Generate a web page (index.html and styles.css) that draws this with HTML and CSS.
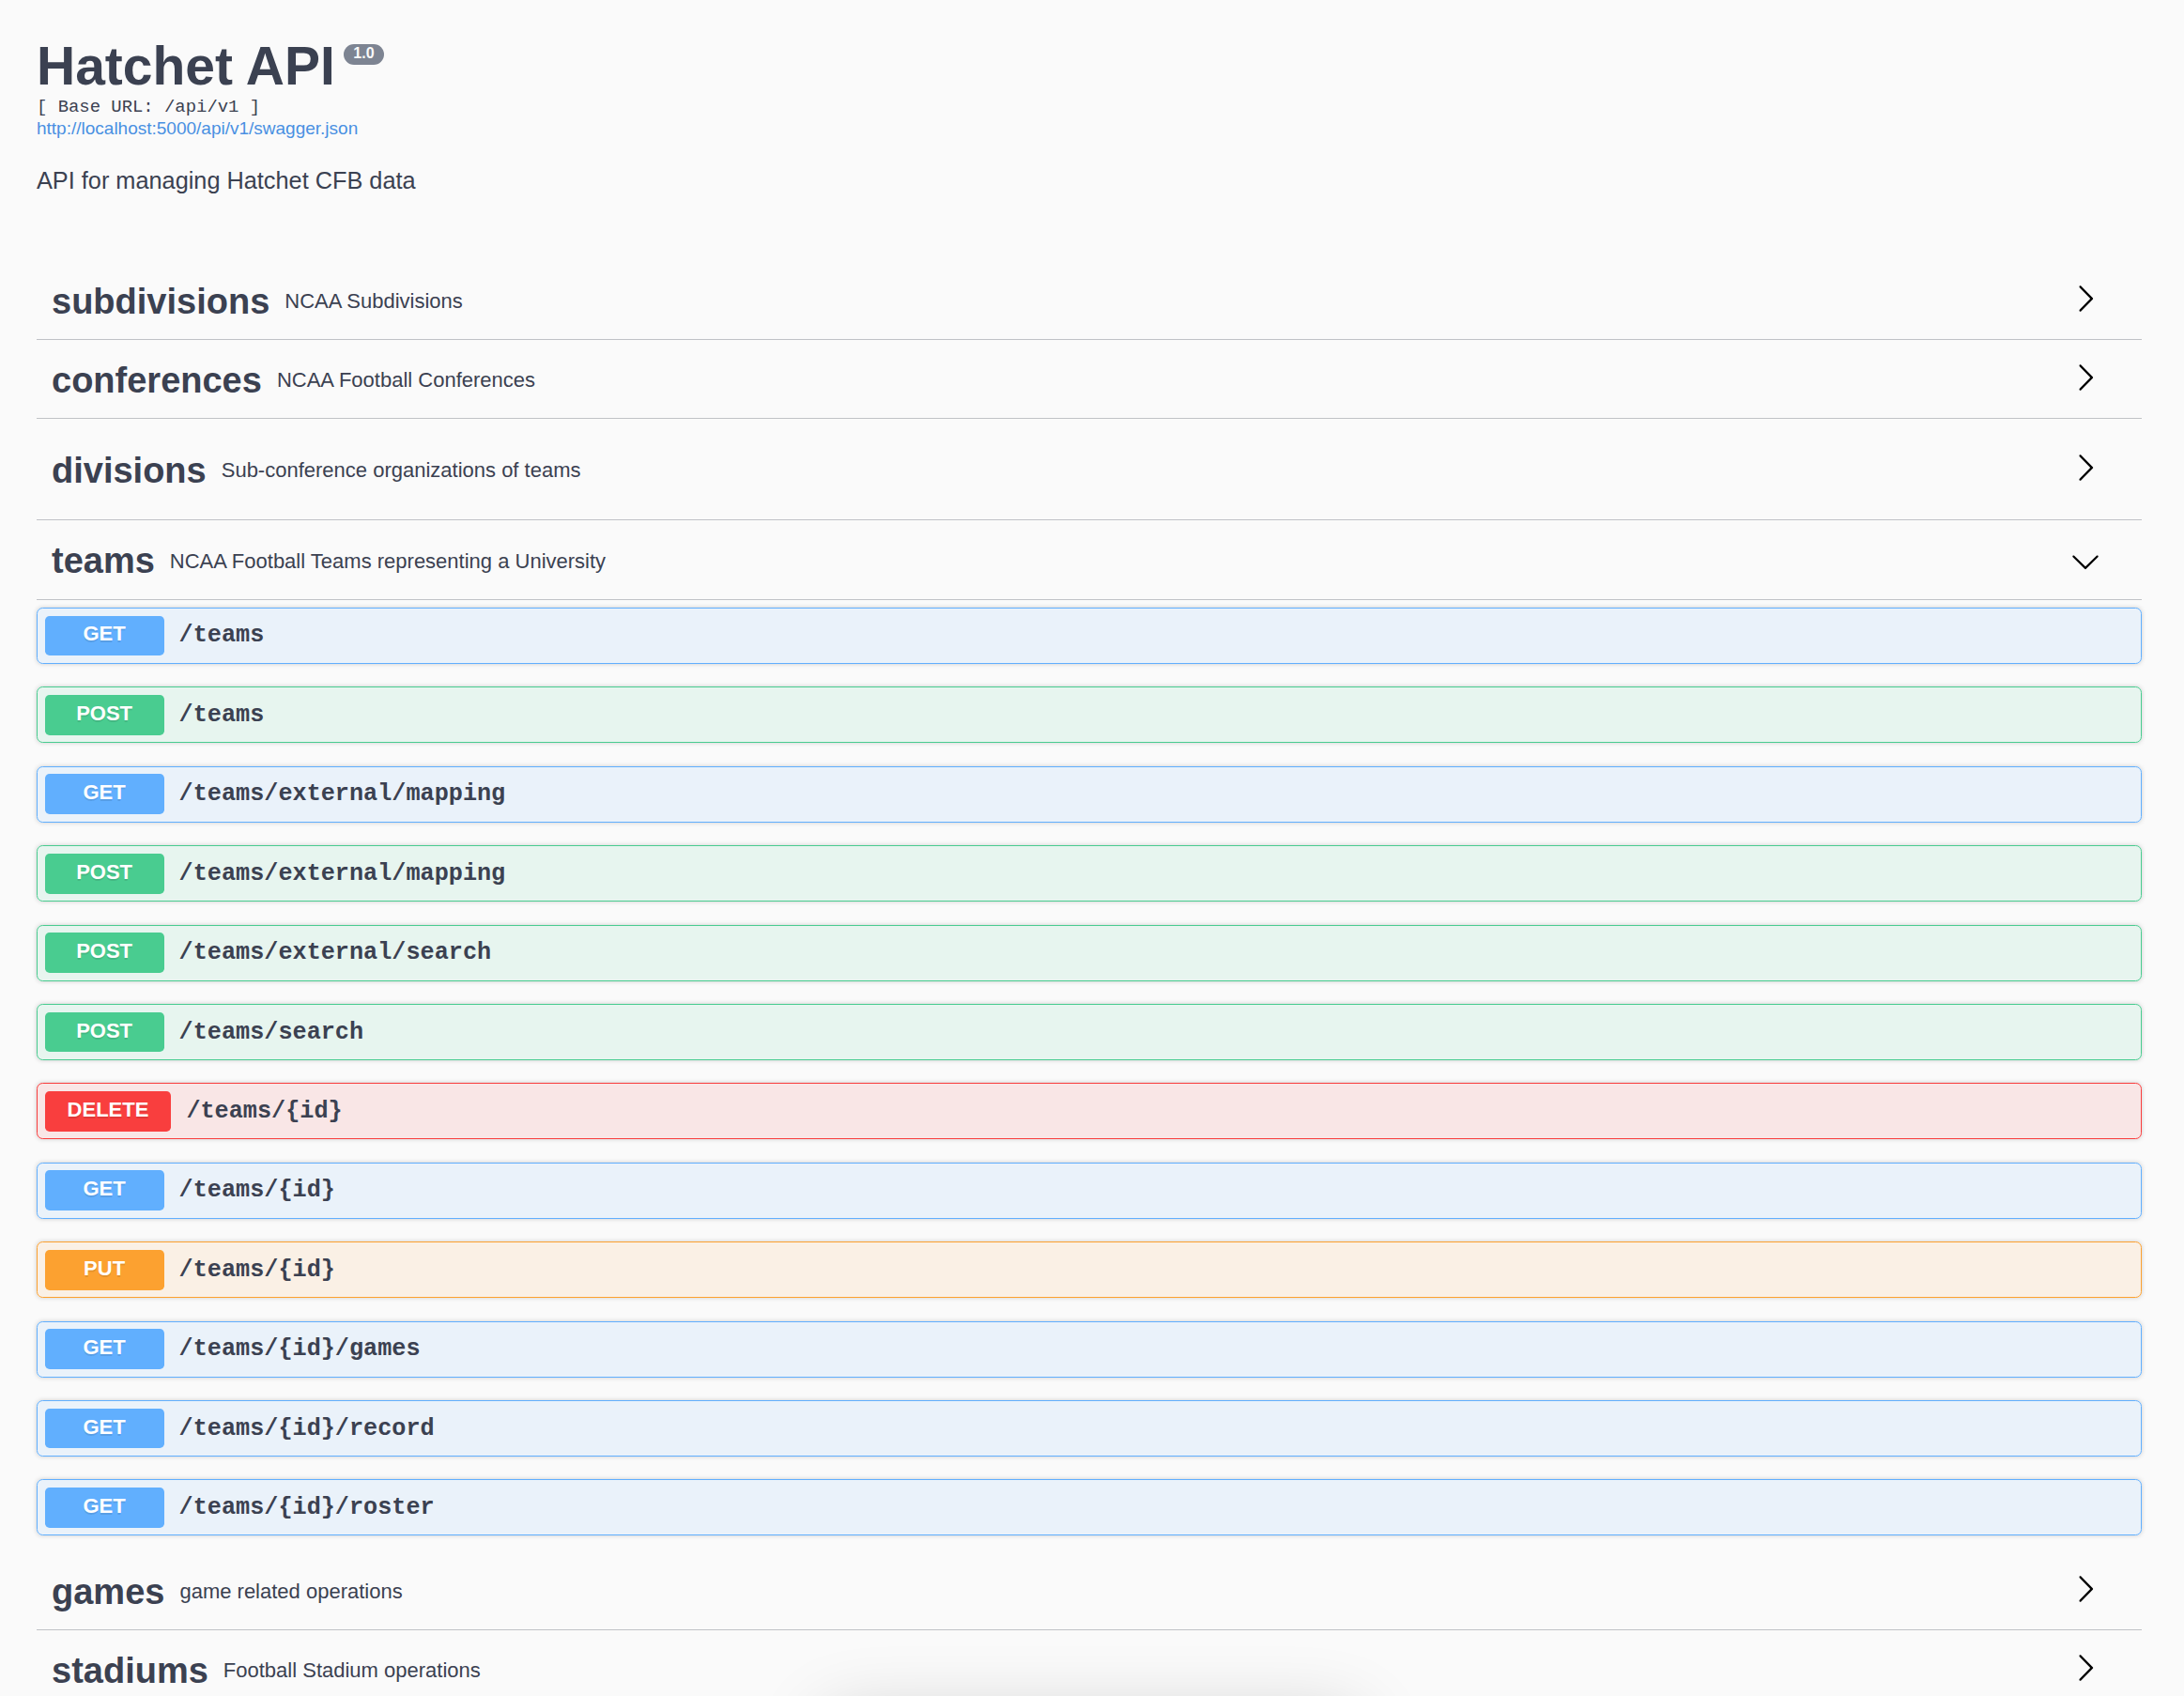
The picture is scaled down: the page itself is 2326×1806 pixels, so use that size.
FILE: index.html
```html
<!DOCTYPE html>
<html lang="en">
<head>
<meta charset="utf-8">
<title>Hatchet API</title>
<link rel="stylesheet" href="styles.css">
</head>
<body>
<div class="page">
  <header class="info">
    <div class="info-title">
      <h2 class="title">Hatchet API</h2>
      <span class="version">1.0</span>
    </div>
    <pre class="base-url">[ Base URL: /api/v1 ]</pre>
    <a class="spec-link" href="#">http://localhost:5000/api/v1/swagger.json</a>
    <p class="info-desc">API for managing Hatchet CFB data</p>
  </header>

  <section class="tags">
    <div class="tag">
      <span class="tag-name">subdivisions</span>
      <span class="tag-desc">NCAA Subdivisions</span>
      <button class="expand expand--closed"><svg viewBox="0 0 20 20"><path d="M13.25 10L6.109 2.58c-.268-.27-.268-.707 0-.979.268-.27.701-.27.969 0l7.83 7.908c.268.271.268.709 0 .979l-7.83 7.908c-.268.271-.701.27-.969 0-.268-.269-.268-.707 0-.979L13.25 10z"/></svg></button>
    </div>
    <div class="tag">
      <span class="tag-name">conferences</span>
      <span class="tag-desc">NCAA Football Conferences</span>
      <button class="expand expand--closed"><svg viewBox="0 0 20 20"><path d="M13.25 10L6.109 2.58c-.268-.27-.268-.707 0-.979.268-.27.701-.27.969 0l7.83 7.908c.268.271.268.709 0 .979l-7.83 7.908c-.268.271-.701.27-.969 0-.268-.269-.268-.707 0-.979L13.25 10z"/></svg></button>
    </div>
    <div class="tag tag--spaced">
      <span class="tag-name">divisions</span>
      <span class="tag-desc">Sub-conference organizations of teams</span>
      <button class="expand expand--closed"><svg viewBox="0 0 20 20"><path d="M13.25 10L6.109 2.58c-.268-.27-.268-.707 0-.979.268-.27.701-.27.969 0l7.83 7.908c.268.271.268.709 0 .979l-7.83 7.908c-.268.271-.701.27-.969 0-.268-.269-.268-.707 0-.979L13.25 10z"/></svg></button>
    </div>
    <div class="tag">
      <span class="tag-name">teams</span>
      <span class="tag-desc">NCAA Football Teams representing a University</span>
      <button class="expand"><svg viewBox="0 0 20 20"><path d="M17.418 6.109c.272-.268.709-.268.979 0s.271.701 0 .969l-7.908 7.83c-.27.268-.707.268-.979 0l-7.908-7.83c-.27-.268-.27-.701 0-.969.271-.268.709-.268.979 0L10 13.25l7.418-7.141z"/></svg></button>
    </div>

    <div class="operations">
      <div class="opblock opblock--get"><span class="method">GET</span><span class="path">/teams</span></div>
      <div class="opblock opblock--post"><span class="method">POST</span><span class="path">/teams</span></div>
      <div class="opblock opblock--get"><span class="method">GET</span><span class="path">/teams/external/mapping</span></div>
      <div class="opblock opblock--post"><span class="method">POST</span><span class="path">/teams/external/mapping</span></div>
      <div class="opblock opblock--post"><span class="method">POST</span><span class="path">/teams/external/search</span></div>
      <div class="opblock opblock--post"><span class="method">POST</span><span class="path">/teams/search</span></div>
      <div class="opblock opblock--delete"><span class="method">DELETE</span><span class="path">/teams/{id}</span></div>
      <div class="opblock opblock--get"><span class="method">GET</span><span class="path">/teams/{id}</span></div>
      <div class="opblock opblock--put"><span class="method">PUT</span><span class="path">/teams/{id}</span></div>
      <div class="opblock opblock--get"><span class="method">GET</span><span class="path">/teams/{id}/games</span></div>
      <div class="opblock opblock--get"><span class="method">GET</span><span class="path">/teams/{id}/record</span></div>
      <div class="opblock opblock--get"><span class="method">GET</span><span class="path">/teams/{id}/roster</span></div>
    </div>

    <div class="tag">
      <span class="tag-name">games</span>
      <span class="tag-desc">game related operations</span>
      <button class="expand expand--closed"><svg viewBox="0 0 20 20"><path d="M13.25 10L6.109 2.58c-.268-.27-.268-.707 0-.979.268-.27.701-.27.969 0l7.83 7.908c.268.271.268.709 0 .979l-7.83 7.908c-.268.271-.701.27-.969 0-.268-.269-.268-.707 0-.979L13.25 10z"/></svg></button>
    </div>
    <div class="tag">
      <span class="tag-name">stadiums</span>
      <span class="tag-desc">Football Stadium operations</span>
      <button class="expand expand--closed"><svg viewBox="0 0 20 20"><path d="M13.25 10L6.109 2.58c-.268-.27-.268-.707 0-.979.268-.27.701-.27.969 0l7.83 7.908c.268.271.268.709 0 .979l-7.83 7.908c-.268.271-.701.27-.969 0-.268-.269-.268-.707 0-.979L13.25 10z"/></svg></button>
    </div>
  </section>
</div>
<div class="toast-shadow"></div>
</body>
</html>
```

FILE: styles.css
```css
html, body {
  margin: 0;
}

body {
  background: #fafafa;
  font-family: "Liberation Sans", Arial, sans-serif;
  color: #3b4151;
  height: 100vh;
  overflow: hidden;
}

.page {
  padding: 37.6px 45px 0 39px;
}

/* ---------- info header ---------- */
.info-title {
  display: flex;
  align-items: flex-start;
}

.title {
  margin: 0;
  font-size: 57px;
  line-height: 64px;
  font-weight: 700;
}

.version {
  box-sizing: border-box;
  height: 22px;
  margin: 9.4px 0 0 9px;
  padding: 0 10.5px 2px;
  border-radius: 57px;
  background: #7d8492;
  color: #fafafa;
  font-size: 16px;
  line-height: 20px;
  font-weight: 700;
}

.base-url {
  margin: 1.3px 0 0;
  font-family: "Liberation Mono", "Courier New", monospace;
  font-size: 18.9px;
  line-height: 22px;
  color: #3b4151;
}

.spec-link {
  display: block;
  margin-top: 0.8px;
  font-size: 19px;
  line-height: 22px;
  color: #4990e2;
  text-decoration: none;
}

.info-desc {
  margin: 30px 0 0;
  font-size: 25.3px;
  line-height: 29px;
}

/* ---------- tags ---------- */
.tags {
  margin-top: 79px;
}

.tag {
  display: flex;
  align-items: center;
  padding: 14px 44.4px 18.8px 16px;
  margin-bottom: 8px;
  border-bottom: 1px solid rgba(59, 65, 81, 0.3);
}

.tag--spaced {
  padding-top: 26px;
  padding-bottom: 30.8px;
}

.tag-name {
  font-size: 38px;
  line-height: 42.4px;
  font-weight: 700;
}

.tag-desc {
  flex: 1;
  padding: 0 16px;
  font-size: 22px;
}

.expand {
  display: flex;
  padding: 0;
  border: 0;
  background: none;
}

.expand svg {
  width: 32px;
  height: 32px;
  fill: #000;
}

.expand--closed svg {
  margin-bottom: 6px;
}

/* ---------- operations ---------- */
.operations {
  padding-top: 0.5px;
}

.opblock {
  display: flex;
  align-items: center;
  padding: 7.6px;
  margin-bottom: 24.43px;
  border: 1px solid;
  border-radius: 6.4px;
  box-shadow: 0 0 5px rgba(0, 0, 0, 0.19);
}

.method {
  box-sizing: border-box;
  display: flex;
  align-items: center;
  justify-content: center;
  min-width: 127px;
  height: 42.8px;
  padding: 0 24px 3px;
  border-radius: 4.8px;
  color: #fff;
  font-size: 22px;
  font-weight: 700;
  text-shadow: 0 1.6px 0 rgba(0, 0, 0, 0.1);
}

.path {
  padding: 0 16px;
  font-family: "Liberation Mono", "Courier New", monospace;
  font-size: 25.2px;
  font-weight: 700;
  color: #3b4151;
}

.opblock--get {
  border-color: #61affe;
  background: rgba(97, 175, 254, 0.1);
}
.opblock--get .method {
  background: #61affe;
}

.opblock--post {
  border-color: #49cc90;
  background: rgba(73, 204, 144, 0.1);
}
.opblock--post .method {
  background: #49cc90;
}

.opblock--delete {
  border-color: #f93e3e;
  background: rgba(249, 62, 62, 0.1);
}
.opblock--delete .method {
  background: #f93e3e;
}

.opblock--put {
  border-color: #fca130;
  background: rgba(252, 161, 48, 0.1);
}
.opblock--put .method {
  background: #fca130;
}

/* faint shadow of a floating panel just below the viewport */
.toast-shadow {
  position: fixed;
  left: 880px;
  top: 1830px;
  width: 565px;
  height: 80px;
  border-radius: 8px;
  background: #fff;
  box-shadow: 0 0 80px rgba(0, 0, 0, 0.2);
}
```
